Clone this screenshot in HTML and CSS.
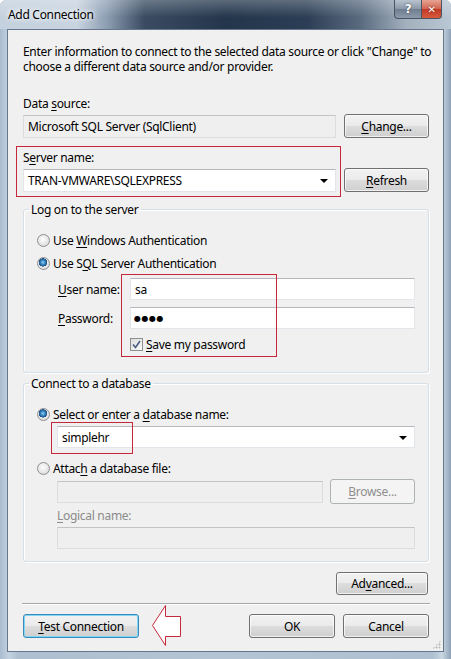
FILE: index.html
```html
<!DOCTYPE html>
<html lang="en">
<head>
  <meta charset="UTF-8">
  <title>Add Connection</title>
  <link rel="stylesheet" href="styles.css">
</head>
<body>
<div class="window">
  <div class="titlebar">
    <span class="caption">Add Connection</span>
    <div class="caption-btns">
      <span class="cbtn help">?</span>
      <span class="cbtn close">&#x2715;</span>
    </div>
  </div>

  <div class="client">
    <p class="intro">Enter information to connect to the selected data source or click "Change" to choose a different data source and/or provider.</p>

    <div class="label first">Data <u>s</u>ource:</div>
    <div class="row">
      <div class="textbox readonly wide">Microsoft SQL Server (SqlClient)</div>
      <span class="btn side"><span><u>C</u>hange...</span></span>
    </div>

    <div class="label">S<u>e</u>rver name:</div>
    <div class="row">
      <div class="textbox combo wide">TRAN-VMWARE\SQLEXPRESS<i class="drop"></i></div>
      <span class="btn side"><span><u>R</u>efresh</span></span>
    </div>

    <fieldset class="group logon">
      <legend>Log on to the server</legend>
      <div class="option"><span class="radio"></span><span>Use <u>W</u>indows Authentication</span></div>
      <div class="option second"><span class="radio on"></span><span>Use S<u>Q</u>L Server Authentication</span></div>
      <div class="creds">
        <label><u>U</u>ser name:</label>
        <div class="textbox">sa</div>
        <label><u>P</u>assword:</label>
        <div class="textbox dots">&#9679;&#9679;&#9679;&#9679;</div>
      </div>
      <div class="option save">
        <span class="check"><svg width="9" height="9" viewBox="0 0 9 9"><path d="M1 4.5 L3.5 7.5 L8 1" fill="none" stroke="#4a5f86" stroke-width="1.6"/></svg></span><span><u>S</u>ave my password</span>
      </div>
    </fieldset>

    <fieldset class="group connect">
      <legend>Connect to a database</legend>
      <div class="option"><span class="radio on"></span><span>Select or enter a <u>d</u>atabase name:</span></div>
      <div class="textbox combo indent db">simplehr<i class="drop"></i></div>
      <div class="option attach"><span class="radio"></span><span>Attac<u>h</u> a database file:</span></div>
      <div class="row indent file">
        <div class="textbox readonly grow"></div>
        <span class="btn disabled"><span><u>B</u>rowse...</span></span>
      </div>
      <div class="label dim indent"><u>L</u>ogical name:</div>
      <div class="textbox readonly indent logical"></div>
    </fieldset>

    <div class="adv-row"><span class="btn adv"><span>Ad<u>v</u>anced...</span></span></div>
    <div class="separator"></div>
    <div class="footer">
      <span class="btn test"><span><u>T</u>est Connection</span></span>
      <span class="btn dlg">OK</span>
      <span class="btn dlg">Cancel</span>
    </div>

    <!-- red markers drawn over the form -->
    <div class="mark m-server"></div>
    <div class="mark m-creds"></div>
    <div class="mark m-db"></div>
    <svg class="arrow" width="30" height="42" viewBox="0 0 30 42">
      <polygon points="0.5,20.5 13.5,0.5 13.5,11.5 28.5,11.5 28.5,31.5 13.5,31.5 13.5,40.5" fill="#fff" stroke="#c4283a"/>
    </svg>
    <i class="grip"></i>
  </div>
</div>
</body>
</html>
```

FILE: styles.css
```css
* {
  margin: 0;
  padding: 0;
  box-sizing: border-box;
}

body {
  width: 451px;
  height: 659px;
  overflow: hidden;
  font-family: "Noto Sans", "Open Sans", sans-serif;
  font-size: 12px;
  letter-spacing: -0.3px;
  color: #000;
}

u {
  text-decoration: underline;
  text-underline-offset: 2px;
}

/* glass frame */
.window {
  height: 659px;
  display: flex;
  flex-direction: column;
  background: linear-gradient(to right, #a9bccf 0, #c3d2e1 2%, #aebfd1 4%, #b4c4d4 50%, #aec0d2 96%, #c9d6e2 98%, #8fa3b8 100%);
  border-radius: 6px 6px 0 0;
}

.titlebar {
  height: 29px;
  display: flex;
  align-items: flex-start;
  justify-content: space-between;
  padding-left: 8px;
  border-radius: 6px 6px 0 0;
  background:
    linear-gradient(to bottom, rgba(255,255,255,0.25), rgba(255,255,255,0) 60%),
    linear-gradient(to right, #c4d1de 0, #c8d4e0 17%, #8a9bb0 24%, #3a4b62 32%, #24364c 50%, #2c3e55 68%, #5a6b80 80%, #a3b0be 90%, #b9c6d3 100%);
}

.caption {
  margin-top: 7px;
  font-size: 12px;
  line-height: 16px;
  color: #000;
  text-shadow: 0 0 6px #fff, 0 0 4px #fff;
}

.caption-btns {
  display: flex;
  margin-right: 9px;
}

.cbtn {
  height: 19px;
  display: flex;
  align-items: center;
  justify-content: center;
  color: #fff;
  font-family: "DejaVu Sans", sans-serif;
  font-weight: bold;
  border: 1px solid #4a5564;
  border-top: 0;
}

.help {
  width: 27px;
  font-size: 12px;
  border-radius: 0 0 0 4px;
  border-right: 0;
  background: linear-gradient(to bottom, #b8c3cf, #8b98a8 50%, #6f7e90 51%, #8c9aab);
  text-shadow: 0 0 2px #333;
}

.close {
  width: 21px;
  font-size: 10px;
  border-radius: 0 0 4px 0;
  background: linear-gradient(to bottom, #e7a393, #d06450 50%, #c03a28 51%, #d85a3c);
  text-shadow: 0 0 2px #6a1a10;
}

/* dialog body */
.client {
  position: relative;
  flex: 1;
  margin: 0 7px 7px;
  padding: 14px 14px 0 15px;
  background: #f0f0f0;
  border: 1px solid #66778b;
  line-height: 15px;
}

.intro {
  width: 410px;
}

.label {
  margin-top: 12px;
}

.label.first {
  margin-top: 22px;
}

.label.dim {
  margin-top: 4px;
  color: #8b8b8b;
}

.row {
  display: flex;
  align-items: center;
  justify-content: space-between;
  margin-top: 3px;
}

.textbox {
  position: relative;
  height: 23px;
  padding: 0 4px;
  display: flex;
  align-items: center;
  background: #fff;
  border: 1px solid #e2e6ea;
  border-top-color: #b4b8bd;
}

.textbox.readonly {
  background: #efefef;
  border-color: #dcdcdc;
  border-top-color: #c4c4c4;
}

.textbox.wide {
  width: 313px;
}

.textbox.dots {
  font-family: "DejaVu Sans", sans-serif;
  font-size: 8px;
  letter-spacing: 0.5px;
  padding-left: 3px;
}

.drop {
  position: absolute;
  right: 7px;
  top: 9px;
  border-left: 4px solid transparent;
  border-right: 4px solid transparent;
  border-top: 4px solid #000;
}

.btn {
  height: 24px;
  display: flex;
  align-items: center;
  justify-content: center;
  border: 1px solid #707070;
  border-radius: 3px;
  background: linear-gradient(to bottom, #f2f2f2 0, #ebebeb 48%, #dddddd 50%, #cfcfcf 100%);
  box-shadow: inset 0 0 0 1px rgba(255,255,255,0.7);
  color: #000;
}

.btn.side {
  width: 85px;
}

.btn.disabled {
  width: 85px;
  height: 25px;
  color: #8e8e8e;
  background: #f4f4f4;
  border-color: #adb2b5;
  box-shadow: none;
}

/* group boxes */
.group {
  margin-top: 10px;
  padding: 15px 13px 20px 13px;
  border: 1px solid #d5dfe5;
  border-radius: 3px;
  box-shadow: inset 1px 1px 0 #fff, 1px 1px 0 #fff;
}

.group legend {
  margin-left: -8px;
  padding: 0 2px;
}

.group.connect {
  margin-top: 3px;
  padding-bottom: 12px;
}

.option {
  height: 16px;
  display: flex;
  align-items: center;
}

.option.second {
  margin-top: 7px;
}

.radio {
  width: 13px;
  height: 13px;
  margin-right: 3px;
  border-radius: 50%;
  border: 1px solid #8f8f8f;
  background: radial-gradient(circle at 45% 40%, #fdfdfd 0, #e6e6e6 55%, #cfcfcf 100%);
}

.radio.on {
  background:
    radial-gradient(circle at 45% 40%, #8ad0f2 0, #2b78b4 30%, #1d4f84 45%, transparent 48%),
    radial-gradient(circle at 45% 40%, #fdfdfd 0, #e6e6e6 55%, #cfcfcf 100%);
}

.creds {
  display: grid;
  grid-template-columns: 72px 1fr;
  row-gap: 7px;
  align-items: center;
  margin-top: 7px;
  padding-left: 21px;
}

.creds .textbox {
  height: 22px;
}

.option.save {
  margin-top: 7px;
  padding-left: 93px;
}

.check {
  width: 13px;
  height: 13px;
  margin-right: 3px;
  display: flex;
  align-items: center;
  justify-content: center;
  border: 1px solid #8e8f8f;
  background: linear-gradient(135deg, #dcdcdc, #fbfbfb);
}

.indent {
  margin-left: 20px;
}

.textbox.db {
  height: 22px;
  margin-top: 4px;
}

.option.attach {
  margin-top: 12px;
}

.row.file {
  margin-top: 3px;
}

.textbox.grow {
  width: 266px;
  height: 22px;
}

.textbox.logical {
  height: 22px;
  margin-top: 4px;
}

/* bottom buttons */
.adv-row {
  display: flex;
  justify-content: flex-end;
  margin-top: 10px;
  padding-right: 1px;
}

.btn.adv {
  width: 92px;
  height: 23px;
}

.separator {
  margin: 8px -1px 0 -1px;
  border-top: 1px solid #a7a7a7;
  border-bottom: 1px solid #fff;
}

.footer {
  display: flex;
  margin-top: 9px;
  gap: 8px;
}

.btn.test {
  width: 116px;
  margin-right: 102px;
  border-color: #3c8ab8;
  box-shadow: inset 0 0 0 1px #7fd7f7;
}

.btn.dlg {
  width: 86px;
}

/* annotation markers */
.mark {
  position: absolute;
  border: 1px solid #c4283a;
}

.m-server {
  left: 8px;
  top: 116px;
  width: 325px;
  height: 51px;
}

.m-creds {
  left: 113px;
  top: 244px;
  width: 156px;
  height: 83px;
}

.m-db {
  left: 43px;
  top: 392px;
  width: 82px;
  height: 32px;
}

.arrow {
  position: absolute;
  left: 144px;
  top: 575px;
}

.grip {
  position: absolute;
  right: 2px;
  bottom: 2px;
  width: 9px;
  height: 9px;
  background: radial-gradient(circle, #b8b8b8 0.8px, transparent 1.2px) 0 0 / 3px 3px;
  clip-path: polygon(100% 0, 100% 100%, 0 100%);
}
```
